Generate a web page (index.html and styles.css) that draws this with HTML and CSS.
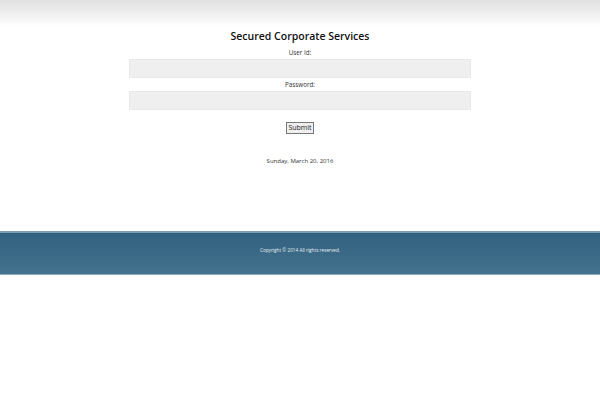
FILE: index.html
```html
<!DOCTYPE html>
<html>
<head>
<meta charset="utf-8">
<link rel="stylesheet" href="styles.css">
</head>
<body>
<div class="topbar"></div>
<main class="content">
  <h1 class="title">Secured Corporate Services</h1>
  <form class="login">
    <label class="label first" for="uid">User Id:</label>
    <input class="field" id="uid" type="text">
    <label class="label" for="pwd">Password:</label>
    <input class="field" id="pwd" type="password">
    <button class="submit" type="button">Submit</button>
  </form>
  <p class="date">Sunday, March 20, 2016</p>
</main>
<footer class="footer">
  <p class="copy">Copyright © 2014 All rights reserved.</p>
</footer>
</body>
</html>
```
FILE: styles.css
```css
html, body {
  margin: 0;
  padding: 0;
  background: #fff;
}
body {
  font-family: "Open Sans", "DejaVu Sans", sans-serif;
  color: #222;
}
.topbar {
  height: 26px;
  background: linear-gradient(to bottom, #e2e2e2 0%, #ebebeb 40%, #ffffff 100%);
}
.content {
  display: flex;
  flex-direction: column;
  align-items: center;
  height: 205px;
}
.title {
  margin: 3px 0 0 0;
  font-size: 10.5px;
  font-weight: 600;
  line-height: 15px;
  color: #111;
}
.login {
  display: flex;
  flex-direction: column;
  align-items: center;
  width: 342px;
}
.label {
  font-size: 6.3px;
  line-height: 9px;
  color: #333;
  margin-top: 2px;
}
.label.first {
  margin-top: 4px;
}
.field {
  box-sizing: border-box;
  width: 342px;
  height: 19px;
  margin: 2px 0 0 0;
  border: 1px solid #e8e8e8;
  background: #efefef;
  padding: 0;
}
.submit {
  margin-top: 12px;
  font-family: "Open Sans", "DejaVu Sans", sans-serif;
  font-size: 7px;
  line-height: 8px;
  padding: 1px 1px;
  background: #efefef;
  border: 1px solid #777;
  border-radius: 0;
  color: #222;
}
.date {
  margin: 23px 0 0 0;
  font-size: 6px;
  line-height: 8px;
  color: #333;
}
.footer {
  height: 44px;
  box-sizing: border-box;
  border-top: 2px solid #7f9db2;
  border-bottom: 1px solid #8eaabd;
  background: linear-gradient(to bottom, #32607f 0%, #43738f 100%);
  display: flex;
  justify-content: center;
}
.copy {
  margin: 14px 0 0 0;
  font-size: 4.7px;
  line-height: 7px;
  color: #e6edf2;
}
```
